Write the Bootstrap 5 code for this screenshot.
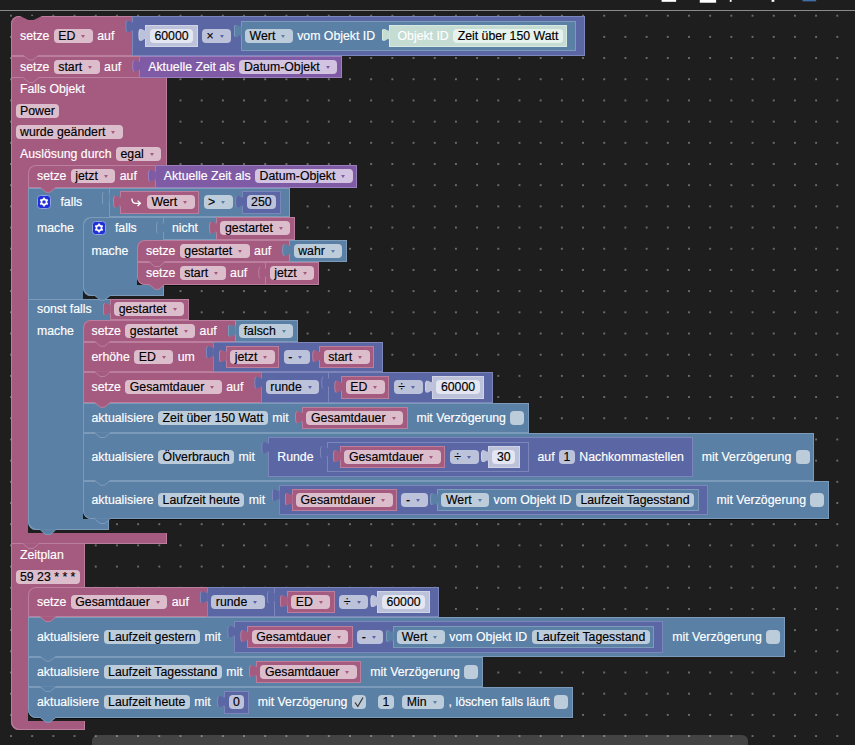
<!DOCTYPE html>
<html lang="de">
<head>
  <meta charset="UTF-8">
  <title>Blockly Skript</title>
  <link href="https://cdn.jsdelivr.net/npm/bootstrap@5.3.0/dist/css/bootstrap.min.css" rel="stylesheet">
  <style>
    body { margin: 0; background: #1e1e1e; }
    .ws { position: relative; z-index: 0; width: 855px; height: 745px; overflow: hidden; font: 12.3px/14px "Liberation Sans", Arial, sans-serif; color: #fff; -webkit-text-stroke: .15px currentColor;
      background-color: #1e1e1e; background-image: radial-gradient(circle, #6b6b6b 1px, transparent 1.3px); background-size: 21.2px 21.2px; background-position: .4px 5.1px; }
    .topcut { display: block; width: 855px; height: 11px; background: #1e1e1e; border-bottom: 1px solid #8a8a8a; margin-bottom: 5px; }
    .scrollthumb { position: absolute; left: 92px; top: 735px; width: 656px; height: 14px; border-radius: 6px; background: rgba(255,255,255,.17); }
    .stapel { margin-left: 11px; }

    .pk { --c: #a55b80; --l: #bc7e9d; --f: #dcbdcc; }
    .pu { --c: #5b67a5; --l: #7c86bb; --f: #bdc2db; }
    .st { --c: #5b80a5; --l: #7c9aba; --f: #bdccdb; }
    .tm { --c: #7f5ba5; --l: #9c80bd; --f: #d2c3e0; }
    .gn { --c: #c4dcd2; --l: #d6e8e0; --f: #e6f2ed; }
    .sh { --c: #bdc2db; --l: #d0d4e6; --f: #e4e6f1; }

    .blk { position: relative; display: flex; background: var(--c); box-shadow: inset 0 0 0 1px var(--l); }
    .ln { display: flex; align-items: center; gap: 4.4px; padding: 4.25px 4.5px; white-space: nowrap; }
    .ln:has(> .inl) { padding-top: 4px; padding-bottom: 4px; }
    .ln.ext { padding-right: 13.5px; }
    .ln.mid { padding-right: 9px; }
    .ln.tight { padding-top: 3.5px; padding-bottom: 3.5px; }
    .ln.thin { padding-top: 3.75px; padding-bottom: 3.75px; }
    .ln.roomy { padding-top: 4.5px; padding-bottom: 4.5px; }
    .ln.hd { min-width: 80.5px; }
    .ln > .t:first-child, .ln > .gearbox:first-child { margin-left: 4.5px; }
    .ln > .t:last-child { margin-right: 4.5px; }
    .ln.dense { padding-top: 3.9px; padding-bottom: 3.9px; }

    .fld { display: inline-flex; align-items: center; height: 14px; padding: 0 4.5px; border-radius: 4px; background: var(--f); color: #000; }
    .dd::after { content: ""; margin: 1px 7.5px 0 6px; border: 2.5px solid transparent; border-top: 3.5px solid var(--c); border-bottom: 0; }
    .dd { padding-right: 0; }
    .chk { width: 14px; padding: 0; justify-content: center; }
    .chk svg { display: block; width: 14px; height: 14px; }

    .val::before, .val::after { content: ""; position: absolute; z-index: 1; top: 4px; width: 7px; height: 13px; clip-path: path("M7 0c0 8-7-7-7 6.5s7-2 7 6.5Z"); }
    .val::before { left: -7px; background: var(--l); }
    .val::after { left: -6px; background: var(--c); }
    .inl { margin-left: 5px; }
    .t + .inl { margin-left: 9px; }
    .ln > .inl:first-child { margin-left: 8.5px; }
    .ln.tight > .inl:first-child { margin-left: 7px; }
    .ln > .inl:last-child { margin-right: 4.5px; }
    .inl + .t { margin-left: 4.5px; }

    .stmt::before, .stmt::after { content: ""; position: absolute; z-index: 2; left: 12px; width: 16px; height: 5px; clip-path: polygon(0 0, 100% 0, 62% 100%, 38% 100%); }
    .stmt::before { bottom: -5px; background: var(--l); }
    .stmt::after { bottom: -4px; background: var(--c); }
    .topn { position: absolute; left: 9px; top: 0; width: 22px; height: 4px; background: #1e1e1e; clip-path: polygon(0 0, 100% 0, 62% 100%, 38% 100%); }

    .cshape { position: relative; display: flex; flex-direction: column; align-items: flex-start; }
    .chead { display: flex; background: var(--c); box-shadow: inset 1px 1px 0 var(--l), inset -1px 0 0 var(--l); }
    .cbody { display: flex; align-items: stretch; }
    .cbody.anhang { margin-top: -1px; }
    .side { position: relative; flex: none; width: 54.5px; padding: 4.25px 0 0 9px; background: var(--c); box-shadow: inset 1px 0 0 var(--l); white-space: nowrap; }
    .side::after { content: ""; position: absolute; z-index: -1; left: 100%; top: 0; width: 9px; height: 9px; background: var(--c); }
    .side.hatside { width: 17px; padding: 0; }
    .nest { display: flex; flex-direction: column; align-items: flex-start; padding-bottom: 3px; }
    .nest > .blk:first-child, .nest > .cshape:first-child > .chead { border-top-left-radius: 8px; }
    .nest > .blk:last-child { border-bottom-left-radius: 8px; box-shadow: inset 0 0 0 1px var(--l), 0 1px 0 #0c0c0c; }
    .nest.flush { padding-bottom: 0; }
    .foot { position: relative; height: 11px; background: var(--c); border-bottom-left-radius: 8px; box-shadow: inset 1px -1px 0 var(--l), inset -1px 0 0 var(--l); }
    .foot.sq { border-radius: 0; height: 11px; }
    .foot.w74 { height: 9px; }
    .w81 { width: 81px; }
    .w156 { width: 156px; }
    .w74 { width: 74px; }
    .hatrow { background: var(--c); box-shadow: inset 1px 0 0 var(--l), inset -1px 0 0 var(--l); }

    .gearbox { display: block; flex: none; width: 14px; height: 14px; margin-right: 5px; }
    .hook { display: block; flex: none; width: 12px; height: 12px; margin-left: 5px; margin-right: 1px; }
  </style>
</head>
<body>

<div class="ws">
  <svg class="topcut" viewBox="0 0 855 11">
    <rect x="685" width="16" height="2" fill="#fff"/>
    <rect x="727" width="18" height="3" fill="#fff"/>
    <rect x="760" width="2" height="2" fill="#fff"/>
    <rect x="806" width="3" height="2" fill="#fff"/>
    <rect x="840" width="15" height="1.5" fill="#3f6fa8"/>
  </svg>

  <div class="nest flush stapel">

    <!-- Startwerte -->
    <div class="blk pk stmt">
      <i class="topn"></i>
      <div class="ln ext"><span class="t">setze</span><span class="fld dd">ED</span><span class="t">auf</span></div>
      <div class="blk pu val">
        <div class="ln roomy">
          <div class="blk sh val inl"><div class="ln"><span class="fld">60000</span></div></div>
          <span class="fld dd">×</span>
          <div class="blk st val inl">
            <div class="ln">
              <span class="fld dd">Wert</span><span class="t">vom Objekt ID</span>
              <div class="blk gn val inl"><div class="ln"><span class="t">Objekt ID</span><span class="fld">Zeit über 150 Watt</span></div></div>
            </div>
          </div>
        </div>
      </div>
    </div>

    <div class="blk pk stmt">
      <div class="ln ext"><span class="t">setze</span><span class="fld dd">start</span><span class="t">auf</span></div>
      <div class="blk tm val"><div class="ln"><span class="t">Aktuelle Zeit als</span><span class="fld dd">Datum-Objekt</span></div></div>
    </div>

    <!-- Trigger: Falls Objekt -->
    <div class="cshape pk">
      <div class="hatrow w156"><div class="ln dense"><span class="t">Falls Objekt</span></div></div>
      <div class="hatrow w156"><div class="ln dense"><span class="fld">Power</span></div></div>
      <div class="hatrow w156"><div class="ln dense"><span class="fld dd">wurde geändert</span></div></div>
      <div class="hatrow w156"><div class="ln dense"><span class="t">Auslösung durch</span><span class="fld dd">egal</span></div></div>
      <div class="cbody">
        <div class="side hatside"></div>
        <div class="nest">
          <div class="blk pk stmt">
            <div class="ln ext"><span class="t">setze</span><span class="fld dd">jetzt</span><span class="t">auf</span></div>
            <div class="blk tm val"><div class="ln"><span class="t">Aktuelle Zeit als</span><span class="fld dd">Datum-Objekt</span></div></div>
          </div>

          <!-- falls / sonst falls -->
          <div class="cshape st">
            <div class="chead">
              <div class="ln hd ext tight"><svg class="gearbox" viewBox="0 0 14 14"><use href="#zahnrad"/></svg><span class="t">falls</span></div>
              <div class="blk st val">
                <div class="ln tight">
                  <div class="blk pk val inl"><div class="ln"><svg class="hook" viewBox="0 0 12 12"><use href="#haken"/></svg><span class="fld dd">Wert</span></div></div>
                  <span class="fld dd">&gt;</span>
                  <div class="blk pu val inl"><div class="ln"><span class="fld">250</span></div></div>
                </div>
              </div>
            </div>
            <div class="cbody">
              <div class="side">mache</div>
              <div class="nest">
                <div class="cshape st">
                  <div class="chead">
                    <div class="ln hd ext"><svg class="gearbox" viewBox="0 0 14 14"><use href="#zahnrad"/></svg><span class="t">falls</span></div>
                    <div class="blk st val">
                      <div class="ln ext"><span class="t">nicht</span></div>
                      <div class="blk pk val"><div class="ln"><span class="fld dd">gestartet</span></div></div>
                    </div>
                  </div>
                  <div class="cbody">
                    <div class="side">mache</div>
                    <div class="nest flush">
                      <div class="blk pk stmt">
                        <div class="ln ext"><span class="t">setze</span><span class="fld dd">gestartet</span><span class="t">auf</span></div>
                        <div class="blk st val"><div class="ln"><span class="fld dd">wahr</span></div></div>
                      </div>
                      <div class="blk pk stmt">
                        <div class="ln ext"><span class="t">setze</span><span class="fld dd">start</span><span class="t">auf</span></div>
                        <div class="blk pk val"><div class="ln"><span class="fld dd">jetzt</span></div></div>
                      </div>
                    </div>
                  </div>
                  <div class="foot stmt w81"></div>
                </div>
              </div>
            </div>
            <div class="chead">
              <div class="ln hd ext thin"><span class="t">sonst falls</span></div>
              <div class="blk pk val"><div class="ln thin"><span class="fld dd">gestartet</span></div></div>
            </div>
            <div class="cbody">
              <div class="side">mache</div>
              <div class="nest flush">
                <div class="blk pk stmt">
                  <div class="ln ext thin"><span class="t">setze</span><span class="fld dd">gestartet</span><span class="t">auf</span></div>
                  <div class="blk st val"><div class="ln thin"><span class="fld dd">falsch</span></div></div>
                </div>
                <div class="blk pk stmt">
                  <div class="ln ext"><span class="t">erhöhe</span><span class="fld dd">ED</span><span class="t">um</span></div>
                  <div class="blk pu val">
                    <div class="ln">
                      <div class="blk pk val inl"><div class="ln"><span class="fld dd">jetzt</span></div></div>
                      <span class="fld dd">-</span>
                      <div class="blk pk val inl"><div class="ln"><span class="fld dd">start</span></div></div>
                    </div>
                  </div>
                </div>
                <div class="blk pk stmt">
                  <div class="ln ext"><span class="t">setze</span><span class="fld dd">Gesamtdauer</span><span class="t">auf</span></div>
                  <div class="blk pu val">
                    <div class="ln mid"><span class="fld dd">runde</span></div>
                    <div class="blk pu val">
                      <div class="ln">
                        <div class="blk pk val inl"><div class="ln"><span class="fld dd">ED</span></div></div>
                        <span class="fld dd">÷</span>
                        <div class="blk sh val inl"><div class="ln"><span class="fld">60000</span></div></div>
                      </div>
                    </div>
                  </div>
                </div>
                <div class="blk st stmt">
                  <div class="ln">
                    <span class="t">aktualisiere</span><span class="fld">Zeit über 150 Watt</span><span class="t">mit</span>
                    <div class="blk pk val inl"><div class="ln"><span class="fld dd">Gesamtdauer</span></div></div>
                    <span class="t">mit Verzögerung</span><span class="fld chk"></span>
                  </div>
                </div>
                <div class="blk st stmt">
                  <div class="ln">
                    <span class="t">aktualisiere</span><span class="fld">Ölverbrauch</span><span class="t">mit</span>
                    <div class="blk pu val inl">
                      <div class="ln roomy">
                        <span class="t">Runde</span>
                        <div class="blk pu val inl">
                          <div class="ln">
                            <div class="blk pk val inl"><div class="ln"><span class="fld dd">Gesamtdauer</span></div></div>
                            <span class="fld dd">÷</span>
                            <div class="blk sh val inl"><div class="ln"><span class="fld">30</span></div></div>
                          </div>
                        </div>
                        <span class="t">auf</span><span class="fld">1</span><span class="t">Nachkommastellen</span>
                      </div>
                    </div>
                    <span class="t">mit Verzögerung</span><span class="fld chk"></span>
                  </div>
                </div>
                <div class="blk st stmt">
                  <div class="ln">
                    <span class="t">aktualisiere</span><span class="fld">Laufzeit heute</span><span class="t">mit</span>
                    <div class="blk pu val inl">
                      <div class="ln">
                        <div class="blk pk val inl"><div class="ln"><span class="fld dd">Gesamtdauer</span></div></div>
                        <span class="fld dd">-</span>
                        <div class="blk st val inl"><div class="ln"><span class="fld dd">Wert</span><span class="t">vom Objekt ID</span><span class="fld">Laufzeit Tagesstand</span></div></div>
                      </div>
                    </div>
                    <span class="t">mit Verzögerung</span><span class="fld chk"></span>
                  </div>
                </div>
              </div>
            </div>
            <div class="foot stmt w81"></div>
          </div>
        </div>
      </div>
      <div class="foot sq stmt w156"></div>
    </div>

    <!-- Trigger: Zeitplan -->
    <div class="cshape pk">
      <div class="hatrow w74"><div class="ln dense"><span class="t">Zeitplan</span></div></div>
      <div class="hatrow w74"><div class="ln dense"><span class="fld">59 23 * * *</span></div></div>
      <div class="cbody anhang">
        <div class="side hatside"></div>
        <div class="nest">
          <div class="blk pk stmt">
            <div class="ln ext"><span class="t">setze</span><span class="fld dd">Gesamtdauer</span><span class="t">auf</span></div>
            <div class="blk pu val">
              <div class="ln mid"><span class="fld dd">runde</span></div>
              <div class="blk pu val">
                <div class="ln">
                  <div class="blk pk val inl"><div class="ln"><span class="fld dd">ED</span></div></div>
                  <span class="fld dd">÷</span>
                  <div class="blk sh val inl"><div class="ln"><span class="fld">60000</span></div></div>
                </div>
              </div>
            </div>
          </div>
          <div class="blk st stmt">
            <div class="ln">
              <span class="t">aktualisiere</span><span class="fld">Laufzeit gestern</span><span class="t">mit</span>
              <div class="blk pu val inl">
                <div class="ln roomy">
                  <div class="blk pk val inl"><div class="ln"><span class="fld dd">Gesamtdauer</span></div></div>
                  <span class="fld dd">-</span>
                  <div class="blk st val inl"><div class="ln"><span class="fld dd">Wert</span><span class="t">vom Objekt ID</span><span class="fld">Laufzeit Tagesstand</span></div></div>
                </div>
              </div>
              <span class="t">mit Verzögerung</span><span class="fld chk"></span>
            </div>
          </div>
          <div class="blk st stmt">
            <div class="ln">
              <span class="t">aktualisiere</span><span class="fld">Laufzeit Tagesstand</span><span class="t">mit</span>
              <div class="blk pk val inl"><div class="ln"><span class="fld dd">Gesamtdauer</span></div></div>
              <span class="t">mit Verzögerung</span><span class="fld chk"></span>
            </div>
          </div>
          <div class="blk st stmt">
            <div class="ln">
              <span class="t">aktualisiere</span><span class="fld">Laufzeit heute</span><span class="t">mit</span>
              <div class="blk pu val inl"><div class="ln"><span class="fld">0</span></div></div>
              <span class="t">mit Verzögerung</span><span class="fld chk"><svg viewBox="0 0 14 14"><path d="M3 7.5 5.8 11.5 11 2.5" fill="none" stroke="#333" stroke-width="1.2"/></svg></span>
              <span class="fld ms-2">1</span><span class="fld dd ms-1">Min</span>
              <span class="t">, löschen falls läuft</span><span class="fld chk"></span>
            </div>
          </div>
        </div>
      </div>
      <div class="foot w74"></div>
    </div>

  </div>

  <div class="scrollthumb"></div>

  <svg width="0" height="0" class="position-absolute">
    <symbol id="zahnrad" viewBox="0 0 14 14">
      <rect x=".5" y=".5" width="13" height="13" rx="3" fill="#2030d8" stroke="#8fa3e0"/>
      <circle cx="7" cy="7" r="2.6" fill="none" stroke="#fff" stroke-width="1.6"/>
      <path d="M7 2.6v1.6M7 9.8v1.6M3.2 4.8l1.4.8M9.4 8.4l1.4.8M3.2 9.2l1.4-.8M9.4 5.6l1.4-.8" stroke="#fff" stroke-width="1.6"/>
    </symbol>
    <symbol id="haken" viewBox="0 0 12 12">
      <path d="M2 2.5v.5c0 3 2 4.3 4 4.3h4M7.6 4.6 10.4 7.3 7.6 10" fill="none" stroke="#fff" stroke-width="1.3"/>
    </symbol>
  </svg>
</div>

</body>
</html>
